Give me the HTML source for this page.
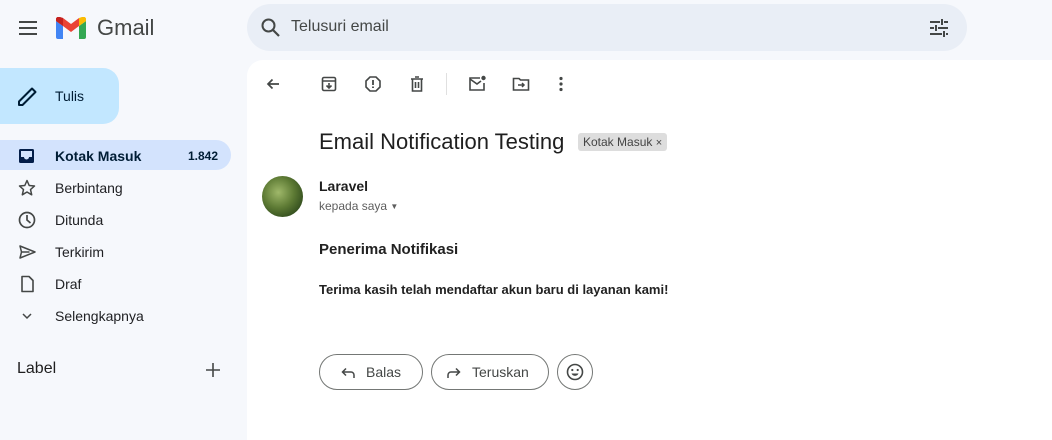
<!DOCTYPE html>
<html><head><meta charset="utf-8"><style>
*{margin:0;padding:0;box-sizing:border-box}
body{width:1052px;height:421px;overflow:hidden;background:#f6f8fc;font-family:"Liberation Sans",Arial,sans-serif;color:#1f1f1f;position:relative}
.a{position:absolute}
svg{display:block}
.nav{position:absolute;left:0;width:231px;height:30px;border-radius:0 15px 15px 0;font-size:14px;color:#202124}
.nav .t{position:absolute;left:55px;top:8px}
.nav svg{position:absolute;left:17px;top:6px}
.btn{position:absolute;top:354px;height:36px;border:1px solid #747775;border-radius:18px;font-size:14px;color:#444746}
</style></head><body>
<svg class="a" style="left:16px;top:16px" width="24" height="24" viewBox="0 0 24 24"><path d="M3 6h18M3 12h18M3 18h18" stroke="#444746" stroke-width="2"/></svg>
<svg class="a" style="left:56px;top:17px" width="30" height="22" viewBox="0 0 30 22"><path d="M0 4v16a2 2 0 0 0 2 2h5V9z" fill="#4285f4"/><path d="M23 22h5a2 2 0 0 0 2-2V4l-7 5z" fill="#34a853"/><path d="M23 9V1l7 3v0z" fill="#fbbc04"/><path d="M0 4 7 9l8 6 8-6V1l-8 6L7 1 3 0a3 3 0 0 0-3 4z" fill="#ea4335"/><path d="M23 1l3-1a3 3 0 0 1 4 4l-7 5z" fill="#fbbc04"/><path d="M0 4a3 3 0 0 1 4-4l3 1v8z" fill="#c5221f"/></svg>
<div class="a" style="left:97px;top:15px;font-size:22px;color:#444746">Gmail</div>
<div class="a" style="left:247px;top:4px;width:720px;height:47px;background:#e9eef6;border-radius:24px"></div>
<svg class="a" style="left:259px;top:16px" width="24" height="24" viewBox="0 0 24 24"><circle cx="9.5" cy="9.5" r="6" fill="none" stroke="#444746" stroke-width="2"/><path d="M14 14l6 6" stroke="#444746" stroke-width="2.2"/></svg>
<div class="a" style="left:291px;top:18px;font-size:16px;color:#444746">Telusuri email</div>
<svg class="a" style="left:927px;top:16px" width="24" height="24" viewBox="0 0 24 24"><path d="M3 6h10M17 6h4M3 12h4M11 12h10M3 18h12M19 18h2M15 3v6M9 9v6M17 15v6" stroke="#444746" stroke-width="2"/></svg>
<div class="a" style="left:0;top:68px;width:119px;height:56px;background:#c2e7ff;border-radius:0 16px 16px 0"></div>
<svg class="a" style="left:16px;top:84px" width="24" height="24" viewBox="0 0 24 24"><path d="M3 21v-3.5L16 4.5l3.5 3.5L6.5 21z" fill="none" stroke="#001d35" stroke-width="2" stroke-linejoin="round"/></svg>
<div class="a" style="left:55px;top:88px;font-size:14px;color:#001d35">Tulis</div>
<div class="nav" style="top:140px;background:#d3e3fd;font-weight:bold;color:#001d35"><svg width="20" height="20" viewBox="0 0 20 20"><rect x="2" y="3" width="15" height="14" rx="1.5" fill="#041e49"/><path d="M4 5h11v6h-3a2.5 2.5 0 0 1-5 0H4z" fill="#d3e3fd"/></svg><span class="t">Kotak Masuk</span><span class="a" style="left:188px;top:9px;font-size:12px">1.842</span></div>
<div class="nav" style="top:172px"><svg width="20" height="20" viewBox="0 0 20 20"><path d="M10 2.5l2.2 5 5.3.5-4 3.6 1.2 5.2L10 14l-4.7 2.8 1.2-5.2-4-3.6 5.3-.5z" fill="none" stroke="#444746" stroke-width="1.5" stroke-linejoin="round"/></svg><span class="t">Berbintang</span></div>
<div class="nav" style="top:204px"><svg width="20" height="20" viewBox="0 0 20 20"><circle cx="10" cy="10" r="7.5" fill="none" stroke="#444746" stroke-width="1.7"/><path d="M10 5v5l3.5 3" fill="none" stroke="#444746" stroke-width="1.7"/></svg><span class="t">Ditunda</span></div>
<div class="nav" style="top:236px"><svg width="20" height="20" viewBox="0 0 20 20"><path d="M3 4l15 6-15 6 1.5-6z M4.5 10h8" fill="none" stroke="#444746" stroke-width="1.5" stroke-linejoin="round"/></svg><span class="t">Terkirim</span></div>
<div class="nav" style="top:268px"><svg width="20" height="20" viewBox="0 0 20 20"><path d="M5 2.5h7l4 4V17.5H5z" fill="none" stroke="#444746" stroke-width="1.6" stroke-linejoin="round"/></svg><span class="t">Draf</span></div>
<div class="nav" style="top:300px"><svg width="20" height="20" viewBox="0 0 20 20"><path d="M6 8l4 4 4-4" fill="none" stroke="#444746" stroke-width="1.5"/></svg><span class="t">Selengkapnya</span></div>
<div class="a" style="left:17px;top:360px;font-size:16px;color:#1f1f1f">Label</div>
<svg class="a" style="left:203px;top:360px" width="20" height="20" viewBox="0 0 20 20"><path d="M10 3v14M3 10h14" stroke="#444746" stroke-width="1.6"/></svg>
<div class="a" style="left:247px;top:60px;width:820px;height:380px;background:#fff;border-radius:16px 0 0 0"></div>
<svg class="a" style="left:263px;top:74px" width="20" height="20" viewBox="0 0 20 20"><path d="M16 10H5M9.5 5.5 5 10l4.5 4.5" fill="none" stroke="#444746" stroke-width="1.7"/></svg>
<svg class="a" style="left:319px;top:74px" width="20" height="20" viewBox="0 0 20 20"><rect x="3.5" y="3.5" width="13" height="13" rx="1.5" fill="none" stroke="#444746" stroke-width="1.6"/><path d="M3.5 7h13M10 9v5M7.5 11.5 10 14l2.5-2.5" fill="none" stroke="#444746" stroke-width="1.6"/></svg>
<svg class="a" style="left:363px;top:74px" width="20" height="20" viewBox="0 0 20 20"><path d="M7 3h6l4 4v6l-4 4H7l-4-4V7z" fill="none" stroke="#444746" stroke-width="1.6"/><path d="M10 6v5M10 12.5v1.5" stroke="#444746" stroke-width="1.8"/></svg>
<svg class="a" style="left:407px;top:74px" width="20" height="20" viewBox="0 0 20 20"><path d="M4 5h12M8 3h4M5.5 5v12h9V5M8.5 8v6M11.5 8v6" fill="none" stroke="#444746" stroke-width="1.6"/></svg>
<div class="a" style="left:446px;top:73px;width:1px;height:22px;background:#e0e0e0"></div>
<svg class="a" style="left:467px;top:74px" width="20" height="20" viewBox="0 0 20 20"><path d="M13 4H3v12h14V9" fill="none" stroke="#444746" stroke-width="1.6"/><path d="M3 5l7 5 4-3" fill="none" stroke="#444746" stroke-width="1.6"/><circle cx="16.5" cy="4" r="2.2" fill="#444746"/></svg>
<svg class="a" style="left:511px;top:74px" width="20" height="20" viewBox="0 0 20 20"><path d="M2.5 4.5h5.5l1.5 1.5h8v10H2.5z" fill="none" stroke="#444746" stroke-width="1.6"/><path d="M7 11h6M11 9l2 2-2 2" fill="none" stroke="#444746" stroke-width="1.5"/></svg>
<svg class="a" style="left:551px;top:74px" width="20" height="20" viewBox="0 0 20 20"><circle cx="10" cy="4.5" r="1.6" fill="#444746"/><circle cx="10" cy="10" r="1.6" fill="#444746"/><circle cx="10" cy="15.5" r="1.6" fill="#444746"/></svg>
<div class="a" style="left:319px;top:129px;font-size:22px;color:#1f1f1f">Email Notification Testing</div>
<div class="a" style="left:578px;top:133px;height:18px;padding:0 5px;background:#ddd;border-radius:3px;font-size:12px;line-height:18px;color:#444">Kotak Masuk <span style="font-size:11px">×</span></div>
<div class="a" style="left:262px;top:176px;width:41px;height:41px;border-radius:50%;background:radial-gradient(circle at 40% 40%,#9fb86a,#5d7a34 45%,#2f4a1c 80%)"></div>
<div class="a" style="left:319px;top:178px;font-size:14px;font-weight:bold;color:#1f1f1f">Laravel</div>
<div class="a" style="left:319px;top:199px;font-size:12px;color:#5e5e5e">kepada saya <span style="font-size:8px;position:relative;top:-1px">▼</span></div>
<div class="a" style="left:319px;top:241px;font-size:15px;font-weight:bold;color:#222">Penerima Notifikasi</div>
<div class="a" style="left:319px;top:282px;font-size:13px;font-weight:bold;color:#222">Terima kasih telah mendaftar akun baru di layanan kami!</div>
<div class="btn" style="left:319px;width:104px"><svg class="a" style="left:19px;top:9px" width="18" height="18" viewBox="0 0 18 18"><path d="M15 14v-3a3 3 0 0 0-3-3H4M7 4.5 3.5 8 7 11.5" fill="none" stroke="#444746" stroke-width="1.5"/></svg><span class="a" style="left:46px;top:9px">Balas</span></div>
<div class="btn" style="left:431px;width:118px"><svg class="a" style="left:13px;top:9px" width="18" height="18" viewBox="0 0 18 18"><path d="M3 14v-3a3 3 0 0 1 3-3h8M11 4.5 14.5 8 11 11.5" fill="none" stroke="#444746" stroke-width="1.5"/></svg><span class="a" style="left:40px;top:9px">Teruskan</span></div>
<div class="btn" style="left:557px;width:36px"><svg class="a" style="left:7px;top:7px" width="20" height="20" viewBox="0 0 20 20"><circle cx="10" cy="10" r="7.5" fill="none" stroke="#444746" stroke-width="1.6"/><circle cx="7.3" cy="8" r="1.1" fill="#444746"/><circle cx="12.7" cy="8" r="1.1" fill="#444746"/><path d="M6.5 11.5a3.8 3.8 0 0 0 7 0z" fill="#444746"/></svg></div>
</body></html>
